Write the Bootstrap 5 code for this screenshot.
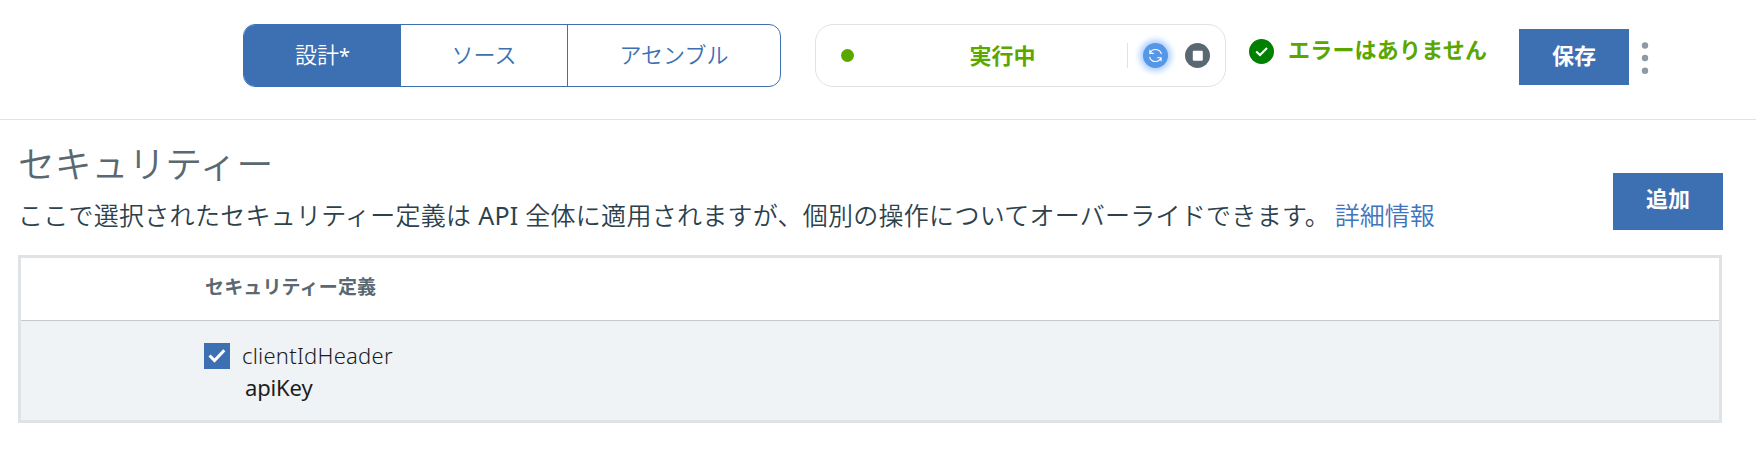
<!DOCTYPE html>
<html lang="ja">
<head>
<meta charset="utf-8">
<meta name="viewport" content="width=device-width, initial-scale=1">
<title>セキュリティー</title>
<link href="https://cdn.jsdelivr.net/npm/bootstrap@5.3.0/dist/css/bootstrap.min.css" rel="stylesheet">
<style>
:root { --brand: #3d70b2; --line: #dfe3e6; --ok: #5aa700; --slate: #5a6872; }
body { font-family: "Noto Sans", "Noto Sans CJK JP", sans-serif; font-size: 22px; line-height: 1.5; color: #152935; background: #fff; }
.jp { font-family: "Noto Sans CJK JP", sans-serif; }
.toolbar { height: 120px; padding: 24px 0 0 243px; border-bottom: 1px solid var(--line); }
.mode-tabs { width: 538px; height: 63px; border: 1px solid var(--brand); border-radius: 12px; overflow: hidden; }
.mode-tabs .btn { --bs-btn-color: var(--brand); --bs-btn-active-bg: var(--brand); --bs-btn-active-color: #fff; font-size: 22px; font-weight: 350; border: 0; border-radius: 0; padding: 0 0 5px; }
.mode-tabs .btn + .btn + .btn { border-left: 1px solid var(--brand); }
.changed { font-family: "Noto Sans", sans-serif; font-size: 20px; font-weight: 400; line-height: 1; }
.tab-design { width: 157px; } .tab-source { width: 166px; }
.run-state { width: 411px; height: 63px; margin-left: 34px; border: 1px solid var(--line); border-radius: 18px; padding: 0 15px 0 25px; }
.dot { width: 13px; height: 13px; background: var(--ok); }
.ok-text { color: var(--ok); font-weight: 700; }
.run-label { padding: 0 0 3px 24px; }
.split { width: 1px; height: 25px; background: var(--line); margin-right: 15px; }
.refresh { width: 25px; height: 25px; background: #5596e6; box-shadow: 0 0 6px 3px #a5cbff; margin-right: 17px; }
.no-error { margin: 15px 0 0 23px; height: 25px; }
.no-error-text { width: 231px; margin-left: 14px; padding-bottom: 6px; letter-spacing: .2px; }
.act { --bs-btn-bg: var(--brand); --bs-btn-color: #fff; --bs-btn-hover-bg: #30588c; --bs-btn-hover-color: #fff; width: 110px; height: 56px; font-size: 22px; font-weight: 700; border: 0; border-radius: 0; padding: 0 0 6px; }
.save { margin-top: 5px; }
.kebab { margin: 17px 0 0 12px; }
.add { margin-top: 33px; height: 57px; padding-bottom: 8px; }
.content-area { padding: 20px 33px 0 18px; }
.page-title { font-size: 36.8px; font-weight: 350; color: var(--slate); line-height: 44px; height: 46px; }
.intro { font-size: 25px; font-weight: 350; line-height: 38px; margin-top: 10px; color: #2c414c; white-space: nowrap; letter-spacing: .27px; }
.latin { font-weight: 400; }
.intro a { color: #3f74bc; margin-left: -2px; letter-spacing: 0; }
.definitions { margin: 21px 1px 0 0; height: 168px; border: 3px solid var(--line); }
.top-row { height: 94px; }
.def-head { height: 63px; border-bottom: 1px solid #c6c9cc; font-size: 19px; font-weight: 700; color: var(--slate); padding: 0 0 5px 184px; letter-spacing: .15px; }
.def-body { height: 99px; background: #eff3f6; color: #1c1c1c; padding: 20px 0 0 183px; }
.tick { width: 26px; height: 26px; background: var(--brand); margin-right: 12px; }
.def-name { font-weight: 300; font-size: 22px; line-height: 28px; letter-spacing: .25px; padding-bottom: 2px; }
.def-type { font-size: 22px; line-height: 32px; padding-left: 41px; letter-spacing: -.15px; }
</style>
</head>
<body>
<header class="toolbar d-flex align-items-start">
  <div class="mode-tabs d-flex jp">
    <button class="btn active tab-design" type="button">設計<span class="changed">*</span></button>
    <button class="btn tab-source" type="button">ソース</button>
    <button class="btn flex-fill" type="button">アセンブル</button>
  </div>
  <div class="run-state d-flex align-items-center">
    <span class="dot rounded-circle"></span>
    <span class="ok-text run-label jp flex-fill text-center">実行中</span>
    <span class="split"></span>
    <span class="refresh rounded-circle d-flex">
      <svg width="25" height="25" viewBox="0 0 25 25" fill="none" stroke="#fff" stroke-width="1.1"><path d="M7 10.2A6 6 0 0 1 18.4 11.2M18 14.8A6 6 0 0 1 6.6 13.8M6.9 6.7V10.4H10.8M18.1 18.3V14.8H14.2"/></svg>
    </span>
    <svg width="25" height="25" viewBox="0 0 25 25"><circle cx="12.5" cy="12.5" r="12.5" fill="#5a6872"/><rect x="7.8" y="7.8" width="10" height="10" rx="1" fill="#fff"/></svg>
  </div>
  <div class="no-error d-flex align-items-center">
    <svg width="25" height="25" viewBox="0 0 25 25"><circle cx="12.5" cy="12.5" r="12.5" fill="#008000"/><path d="M7.2 12.4L11 16L18 9" fill="none" stroke="#fff" stroke-width="2.1"/></svg>
    <span class="ok-text jp no-error-text text-nowrap">エラーはありません</span>
  </div>
  <button class="btn act save jp" type="button">保存</button>
  <svg class="kebab" width="8" height="34" viewBox="0 0 8 34" fill="#8c9ba5"><circle cx="4" cy="4.5" r="3.2"/><circle cx="4" cy="17" r="3.2"/><circle cx="4" cy="29.7" r="3.2"/></svg>
</header>
<main class="content-area">
  <div class="top-row d-flex justify-content-between align-items-start">
    <div>
      <h1 class="page-title jp mb-0">セキュリティー</h1>
      <p class="intro mb-0">ここで選択されたセキュリティー定義は <span class="latin">API</span> 全体に適用されますが、個別の操作についてオーバーライドできます。 <a class="text-decoration-none" href="#">詳細情報</a></p>
    </div>
    <button class="btn act add jp" type="button">追加</button>
  </div>
  <section class="definitions">
    <div class="def-head d-flex align-items-center jp">セキュリティー定義</div>
    <div class="def-body">
      <div class="d-flex align-items-center">
        <span class="tick d-flex"><svg width="26" height="26" viewBox="0 0 26 26"><path d="M5.5 12.5L10.5 17.5L20.3 7.3" fill="none" stroke="#fff" stroke-width="3"/></svg></span>
        <span class="def-name">clientIdHeader</span>
      </div>
      <div class="def-type">apiKey</div>
    </div>
  </section>
</main>
<script src="https://cdn.jsdelivr.net/npm/bootstrap@5.3.0/dist/js/bootstrap.bundle.min.js"></script>
</body>
</html>
